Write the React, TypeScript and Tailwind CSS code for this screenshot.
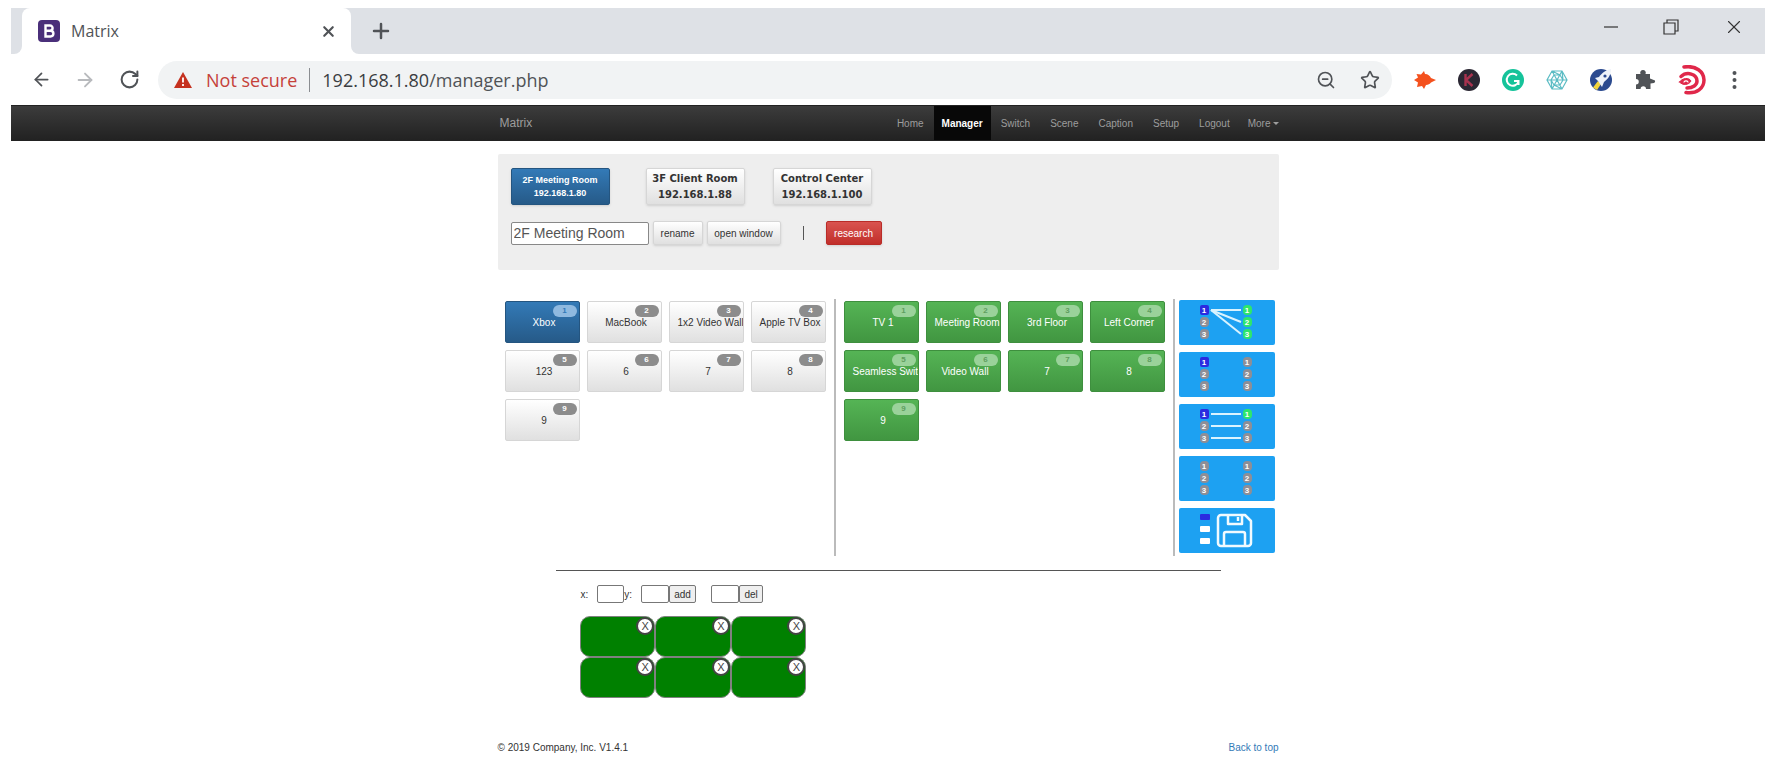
import { ArrowLeft, ArrowRight, Plus, RotateCw, Star, X, ZoomOut } from "lucide-react";
import { clsx } from "clsx";

const navItems = ["Home", "Manager", "Switch", "Scene", "Caption", "Setup", "Logout"];

const inputs = ["Xbox", "MacBook", "1x2 Video Wall", "Apple TV Box", "123", "6", "7", "8", "9"];
const outputs = ["TV 1", "Meeting Room", "3rd Floor", "Left Corner", "Seamless Switch", "Video Wall", "7", "8", "9"];

const defaultBtn = "border-[#d6d6d6] bg-linear-to-b from-white to-[#e0e0e0] text-[#333]";
const primaryBtn = "border-[#245580] bg-linear-to-b from-[#337ab7] to-[#265a88] text-white";
const successBtn = "border-[#3e8f3e] bg-linear-to-b from-[#55b455] to-[#419641] text-white";
const dangerBtn = "border-[#b92c28] bg-linear-to-b from-[#d9534f] to-[#c12e2a] text-white";

const Extensions = () => (
  <div className="flex items-center gap-[22px]">
    <svg width="22" height="22" viewBox="0 0 22 22">
      <path d="M0 11 L4 8.500 L2.500 5 L7 5.500 L10 2 L11 5 C14 5 16 7 17 9 L22 11 L17 13.500 C16 15 14 16 12 16 L10 20 L8 17 L3 18 L4 13.500 Z" fill="#f4511e" />
    </svg>
    <svg width="22" height="22" viewBox="0 0 22 22">
      <circle cx="11" cy="11" r="11" fill="#2b2733" />
      <path d="M7.500 5 V17 M14.500 5 L8 11 L14.500 17" fill="none" stroke="#a8324f" strokeWidth="2.400" />
    </svg>
    <svg width="22" height="22" viewBox="0 0 22 22">
      <circle cx="11" cy="11" r="11" fill="#15c39a" />
      <path d="M15 6.500 A6 6 0 1 0 16.500 12.500 M16.500 16 V12 H12" fill="none" stroke="#fff" strokeWidth="2" />
    </svg>
    <svg width="22" height="22" viewBox="0 0 22 22" fill="none" stroke="#5bbcc4" strokeWidth="1.2">
      <path d="M6 2 H16 L21 11 L16 20 H6 L1 11 Z M6 2 L16 20 M16 2 L6 20 M1 11 H21 M8 6 H14 L17 11 L14 16 H8 L5 11 Z M6 2 L14 6 M16 2 L17 11 M16 20 L8 16 M6 20 L5 11" />
    </svg>
    <svg width="22" height="22" viewBox="0 0 22 22">
      <circle cx="11" cy="11" r="11" fill="#2b4a8f" />
      <path d="M3 18.500 L8 12 L11 15 L7 21 Z" fill="#f2d43d" />
      <path d="M21 0 C15 1 11 5 9 8 L5 9 L8 12 L10 15 L12 18 L14 13 C18 10 21 6 21 0 Z" fill="#eef3fa" />
      <circle cx="15" cy="7" r="1.600" fill="#2b4a8f" />
    </svg>
    <svg width="22" height="22" viewBox="0 0 22 22" fill="#505357">
      <path d="M2 5 H6.500 A2.800 2.800 0 1 1 11.500 5 H16 V9.500 L21 11.500 A2 2 0 0 1 20 14 L16.500 14.500 V20 H12 A2.700 2.700 0 0 0 6.600 20 H2 V15.500 A2.700 2.700 0 0 0 2 10 Z" />
    </svg>
    <svg width="28" height="30" viewBox="0 0 28 30" fill="none" stroke="#e0284a" strokeLinecap="round">
      <path d="M6 2 C18 0 26 7 26 15 C26 23 19 29 8 27.500" strokeWidth="3.500" />
      <path d="M3 11.500 C9 6 19 9 19 16 C19 20 15 23 9 23" strokeWidth="3.500" />
      <path d="M1.500 17 C4 13 11 12 13 16 C11 20 5 21 1.500 17 Z" fill="#e0284a" strokeWidth="1" />
      <path d="M6 17 C7 15.500 9 15.500 10 17" stroke="#fff" strokeWidth="1.200" />
    </svg>
  </div>
);

const BrowserChrome = () => (
  <div className="font-['Noto_Sans',sans-serif] text-[#505357]">
    <div className="flex h-[46px] bg-[#dee1e6]">
      <div className="w-[11px] bg-white">
        <div className="h-full rounded-br-lg bg-[#dee1e6]" />
      </div>
      <div className="flex w-[329px] items-center rounded-t-lg bg-white pr-3.5 pl-4">
        <svg width="22" height="22" viewBox="0 0 22 22">
          <rect width="22" height="22" rx="4" fill="#4a2f7a" />
          <path d="M7.500 5.500 H12 A2.600 2.600 0 0 1 12 10.700 H7.500 H12.500 A2.900 2.900 0 0 1 12.500 16.500 H7.500 Z" fill="none" stroke="#fff" strokeWidth="2.400" />
        </svg>
        <span className="ml-[11px] font-['Open_Sans',sans-serif] text-base">Matrix</span>
        <button aria-label="Close tab" className="ml-auto">
          <X size={17} strokeWidth={3} />
        </button>
      </div>
      <div className="flex-1 bg-white">
        <div className="flex h-full items-center rounded-bl-lg bg-[#dee1e6] pr-5 pl-[18px]">
          <button aria-label="New tab">
            <Plus size={24} strokeWidth={2.5} />
          </button>
          <div className="ml-auto flex items-center gap-[44px] pb-2 text-[#333]">
            <button aria-label="Minimize">
              <svg width="16" height="16" viewBox="0 0 16 16" stroke="currentColor" strokeWidth="1.200">
                <path d="M1 8 H15" />
              </svg>
            </button>
            <button aria-label="Restore">
              <svg width="16" height="16" viewBox="0 0 16 16" fill="none" stroke="currentColor" strokeWidth="1.200">
                <path d="M1 4 H12 V15 H1 Z M4 4 V1 H15 V12 H12" />
              </svg>
            </button>
            <button aria-label="Close window">
              <X size={22} strokeWidth={1.2} />
            </button>
          </div>
        </div>
      </div>
    </div>

    <div className="flex h-[51px] items-center bg-white pr-7 pl-5">
      <button aria-label="Back">
        <ArrowLeft size={21} />
      </button>
      <button aria-label="Forward" className="ml-[22px] text-[#b8babd]">
        <ArrowRight size={22} />
      </button>
      <button aria-label="Reload" className="ml-[23px]">
        <RotateCw size={21} strokeWidth={2.3} />
      </button>
      <div className="ml-[18px] flex h-[38px] flex-1 items-center rounded-full bg-[#f1f3f4] pr-3 pl-4 font-['Open_Sans',sans-serif] text-lg">
        <svg width="18" height="16" viewBox="0 0 18 16">
          <path d="M9 0 L18 16 H0 Z" fill="#c5311f" />
          <path d="M9 5.500 V10.500 M9 12 V14" stroke="#fff" strokeWidth="1.800" />
        </svg>
        <span className="ml-3.5 text-[#c5413a]">Not secure</span>
        <span className="mx-3 h-6 w-px bg-[#8a8d91]" />
        <span>
          <span className="text-[#3a3d41]">192.168.1.80</span>/manager.php
        </span>
        <div className="ml-auto flex items-center gap-6">
          <button aria-label="Zoom">
            <ZoomOut size={20} />
          </button>
          <button aria-label="Bookmark">
            <Star size={20} />
          </button>
        </div>
      </div>
      <div className="ml-[22px] flex items-center gap-[26px]">
        <Extensions />
        <button aria-label="Menu">
          <svg width="5" height="20" viewBox="0 0 5 20" fill="#505357">
            <circle cx="2.500" cy="3" r="2" />
            <circle cx="2.500" cy="10" r="2" />
            <circle cx="2.500" cy="17" r="2" />
          </svg>
        </button>
      </div>
    </div>
  </div>
);

const Navbar = () => (
  <nav className="border-y border-y-[#222] bg-linear-to-b from-[#3c3c3c] to-[#222] text-[#9d9d9d]">
    <div className="mx-auto flex h-[34px] max-w-[781px] items-center justify-between">
      <a href="#" className="pl-0.5 text-xs">
        Matrix
      </a>
      <div className="flex h-full items-stretch">
        {navItems.map((item) => (
          <a
            key={item}
            href="#"
            className={clsx("flex items-center", item === "Manager" ? "bg-[#080808] px-2 font-bold text-white" : "px-2.5")}
          >
            {item}
          </a>
        ))}
        <button className="flex items-center gap-0.5 pl-2">
          More
          <span className="border-x-3 border-t-3 border-x-transparent border-t-[#9d9d9d]" />
        </button>
      </div>
    </div>
  </nav>
);

const DevicePanel = () => (
  <section className="h-[116px] rounded-xs bg-[#eee] pt-3.5 pl-[13px]">
    <div className="flex">
      <button className={clsx("h-[37px] w-[99px] rounded-xs border text-[9px] leading-[13px] font-bold shadow-sm", primaryBtn)}>
        2F Meeting Room
        <br />
        192.168.1.80
      </button>
      <button className={clsx("ml-9 h-[37px] w-[99px] rounded-xs border font-['DejaVu_Sans',sans-serif] leading-4 font-bold shadow-sm", defaultBtn)}>
        3F Client Room
        <br />
        192.168.1.88
      </button>
      <button className={clsx("ml-7 h-[37px] w-[99px] rounded-xs border font-['DejaVu_Sans',sans-serif] leading-4 font-bold shadow-sm", defaultBtn)}>
        Control Center
        <br />
        192.168.1.100
      </button>
    </div>
    <div className="mt-4 flex items-center">
      <input
        aria-label="Device name"
        defaultValue="2F Meeting Room"
        className="h-[23px] w-[138px] rounded-xs border border-[#888] bg-white px-0.5 text-sm text-[#555]"
      />
      <button className={clsx("ml-1 h-6 w-[50px] rounded-xs border shadow-sm", defaultBtn)}>rename</button>
      <button className={clsx("ml-1 h-6 w-[74px] rounded-xs border shadow-sm", defaultBtn)}>open window</button>
      <span className="mx-[22px] h-3.5 w-px bg-[#555]" />
      <button className={clsx("h-6 w-[56px] rounded-xs border shadow-sm", dangerBtn)}>research</button>
    </div>
  </section>
);

type TileProps = { label: string; index: number; kind: "default" | "primary" | "success" };

const Tile = ({ label, index, kind }: TileProps) => (
  <button
    className={clsx(
      "relative flex h-[42px] items-center overflow-hidden rounded-xs border pr-1 pl-2 whitespace-nowrap",
      kind === "default" && defaultBtn,
      kind === "primary" && primaryBtn,
      kind === "success" && successBtn,
    )}
  >
    <span
      className={clsx(
        "absolute top-[3px] right-0.5 h-3 w-6 rounded-full text-center text-[8px] leading-3 font-bold",
        kind === "default" && "bg-[#8c8c8c] text-white",
        kind === "primary" && "bg-[#8fb9df] text-[#337ab7]",
        kind === "success" && "bg-[#9ad29a] text-[#5f9e5f]",
      )}
    >
      {index}
    </span>
    <span className="relative mx-auto">{label}</span>
  </button>
);

type RouteProps = { label: string; links?: number[][]; left?: boolean; right?: number };

const RouteButton = ({ label, links = [], left = false, right = 0 }: RouteProps) => (
  <button aria-label={label} className="flex h-[45px] justify-center rounded-xs bg-[#1da1f2]">
    <svg width="96" height="45" viewBox="0 0 96 45">
      {links.map(([from, to]) => (
        <line key={to} x1="32" y1={10 + from * 12} x2="62" y2={10 + to * 12} stroke="#d9f3ff" strokeWidth="2" />
      ))}
      {[0, 1, 2].map((row) => (
        <g key={row} fontSize="8" fontWeight="bold" fill="#fff" textAnchor="middle">
          <rect x="21" y={5 + row * 12} width="9" height="10" rx={left && row === 0 ? 2 : 4} fill={left && row === 0 ? "#2b2be0" : "#8e8e96"} />
          <text x="25" y={13 + row * 12}>{row + 1}</text>
          <rect x="64" y={5 + row * 12} width="9" height="10" rx="4" fill={row < right ? "#2ee66b" : "#8e8e96"} />
          <text x="68" y={13 + row * 12}>{row + 1}</text>
        </g>
      ))}
    </svg>
  </button>
);

const SaveButton = () => (
  <button aria-label="Save scene" className="flex h-[45px] justify-center rounded-xs bg-[#1da1f2]">
    <svg width="96" height="45" viewBox="0 0 96 45">
      <rect x="21" y="6" width="10" height="6" rx="1" fill="#2b2be0" />
      <rect x="21" y="18" width="10" height="6" rx="1" fill="#fff" />
      <rect x="21" y="30" width="10" height="6" rx="1" fill="#fff" />
      <g fill="none" stroke="#f0faff" strokeWidth="2.500" strokeLinejoin="round">
        <path d="M42 7 H66 L72 13 V35 A3 3 0 0 1 69 38 H42 A3 3 0 0 1 39 35 V10 A3 3 0 0 1 42 7 Z" />
        <path d="M49 7 V16 H63 V7 M59 9 V13" />
        <path d="M45 37 V26 A2 2 0 0 1 47 24 H64 A2 2 0 0 1 66 26 V37" />
      </g>
    </svg>
  </button>
);

const WallEditor = () => (
  <section className="pl-[82px]">
    <form className="flex h-[18px] items-center pl-px">
      <label htmlFor="wall-x">x:</label>
      <input id="wall-x" className="ml-[9px] h-[18px] w-[27px] rounded-xs border border-[#777]" />
      <label htmlFor="wall-y">y:</label>
      <input id="wall-y" className="ml-[9px] h-[18px] w-[28px] rounded-xs border border-[#777]" />
      <button type="button" className="h-[18px] w-[27px] rounded-xs border border-[#777] bg-[#efefef]">
        add
      </button>
      <input aria-label="Wall number" className="ml-[15px] h-[18px] w-[28px] rounded-xs border border-[#777]" />
      <button type="button" className="h-[18px] w-[24px] rounded-xs border border-[#777] bg-[#efefef]">
        del
      </button>
    </form>
    <div className="mt-[13px] grid w-[227px] grid-cols-3">
      {[1, 2, 3, 4, 5, 6].map((cell) => (
        <div key={cell} className="flex h-[41px] items-start justify-end rounded-[10px] border border-[#808080] bg-[#008000]">
          <button
            aria-label={`Remove screen ${cell}`}
            className="size-[18px] rounded-full border-2 border-[#444] bg-white text-center text-[11px] leading-[14px] text-[#444]"
          >
            X
          </button>
        </div>
      ))}
    </div>
  </section>
);

const App = () => (
  <div className="bg-white pt-2 pr-[3px] pl-[11px] font-['Liberation_Sans',Arial,sans-serif] text-[10px] text-[#333]">
    <BrowserChrome />
    <Navbar />
    <main className="mx-auto mt-[13px] max-w-[781px]">
      <DevicePanel />
      <div className="mt-[29px] flex h-[257px] pr-1 pl-[7px]">
        <div className="grid flex-1 auto-rows-min grid-cols-4 gap-[7px] border-r-2 border-[#bbb] pt-0.5 pr-2">
          {inputs.map((label, i) => (
            <Tile key={label} label={label} index={i + 1} kind={i === 0 ? "primary" : "default"} />
          ))}
        </div>
        <div className="grid flex-1 auto-rows-min grid-cols-4 gap-[7px] border-r-2 border-[#bbb] pt-0.5 pr-2 pl-2">
          {outputs.map((label, i) => (
            <Tile key={label} label={label} index={i + 1} kind="success" />
          ))}
        </div>
        <div className="flex w-[100px] flex-col gap-[7px] pt-px pl-1">
          <RouteButton label="One input to all outputs" links={[[0, 0], [0, 1], [0, 2]]} left right={3} />
          <RouteButton label="Clear one input" left />
          <RouteButton label="One to one" links={[[0, 0], [1, 1], [2, 2]]} left right={1} />
          <RouteButton label="Clear all" />
          <SaveButton />
        </div>
      </div>
      <hr className="mx-[58px] mt-3.5 mb-3.5 border-[#555]" />
      <WallEditor />
      <footer className="mt-[42px] flex justify-between pb-2">
        <p>© 2019 Company, Inc. V1.4.1</p>
        <a href="#" className="text-[#337ab7]">
          Back to top
        </a>
      </footer>
    </main>
  </div>
);

export default App;
